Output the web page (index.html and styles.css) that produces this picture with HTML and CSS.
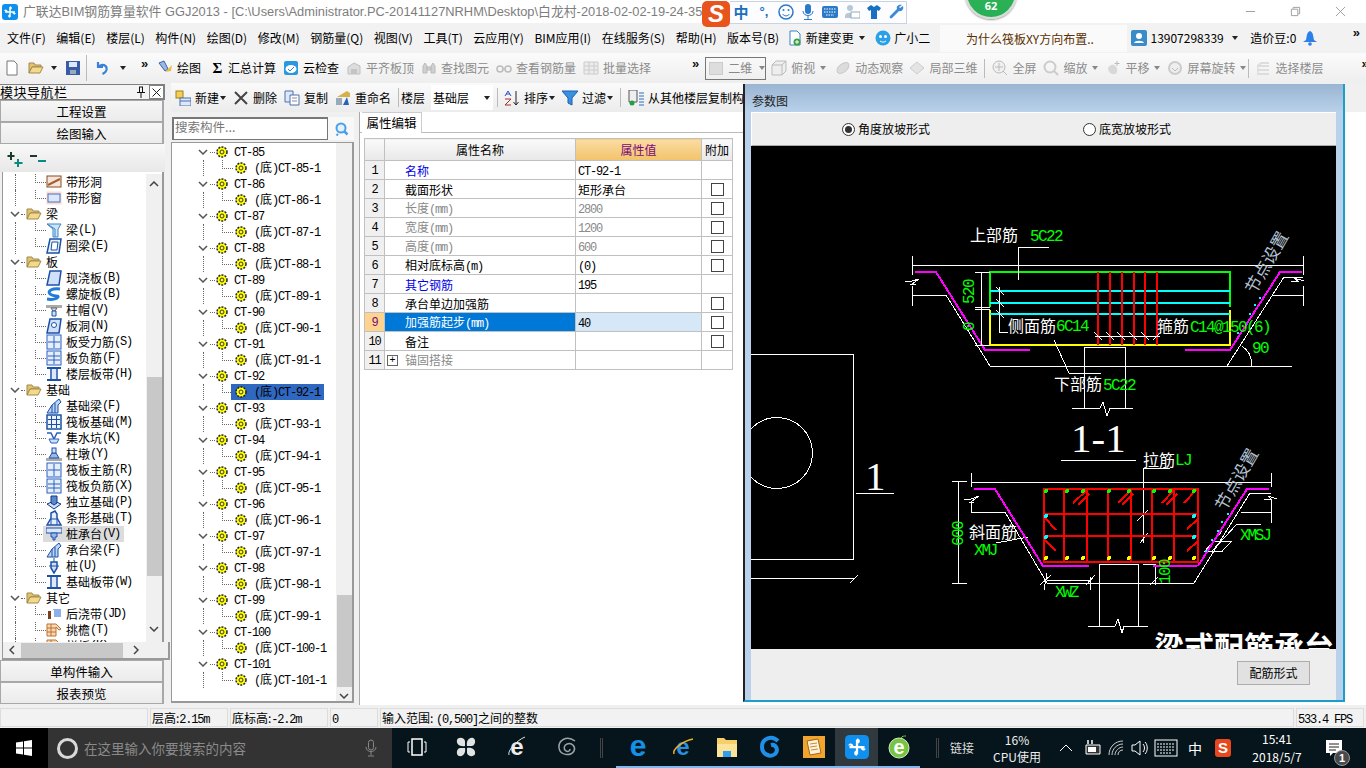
FILE: index.html
```html
<!DOCTYPE html>
<html lang="zh-CN">
<head>
<meta charset="utf-8">
<title>广联达BIM钢筋算量软件 GGJ2013</title>
<link rel="stylesheet" href="styles.css">
</head>
<body>
<svg class="defs">
<symbol id="gl" viewBox="0 0 16 16"><rect x="0" y="0" width="16" height="16" rx="3" fill="#0f8fee"/><path d="M8 3v10M3 8h10M8 3c1.500 0 1.500 2 0 2M3 7c0-1 2-1 2 1M13 9c0 1-2 1-2-1M8 13c-1.500 0-1.500-2 0-2" stroke="#fff" stroke-width="1.500" fill="none"/></symbol>
<symbol id="folder" viewBox="0 0 16 16"><path d="M1 3h5l1 2h6v2H4l-3 6z" fill="#e4c26c" stroke="#a08a50"/><path d="M4 7h11l-3 6H1z" fill="#f4d98a" stroke="#a08a50"/></symbol>
<symbol id="gear" viewBox="0 0 12 12"><circle cx="6" cy="6" r="5" fill="#ff0" stroke="#222" stroke-width="1.500" stroke-dasharray="2 1.200"/><circle cx="6" cy="6" r="2" fill="#ff0" stroke="#333"/></symbol>
<symbol id="chev" viewBox="0 0 10 6"><path d="M1 1l4 4 4-4" stroke="#555" stroke-width="1.500" fill="none"/></symbol>
<symbol id="hole" viewBox="0 0 16 16"><rect x="1" y="2" width="14" height="11" fill="#f7e4d8" stroke="#8a4a20"/><path d="M2 11l12-6" stroke="#a06030" stroke-width="2"/></symbol>
<symbol id="win" viewBox="0 0 16 16"><rect x="0.500" y="1.500" width="15" height="13" fill="#fbdcd0"/><rect x="2" y="4" width="12" height="8" fill="#dbe8fb" stroke="#4a70c8"/></symbol>
<symbol id="beam" viewBox="0 0 16 16"><path d="M1 2h14l-3 5v8H7V7z" fill="#cfe4f8" stroke="#3a88c8"/><path d="M9 7v8M1 2l8 5" stroke="#3a88c8"/></symbol>
<symbol id="ring" viewBox="0 0 16 16"><path d="M4 1h11l-2 14H1z" fill="#eaf2fc" stroke="#1c50a8" stroke-width="1.500"/><path d="M6 4h6l-1 8H5z" fill="#fff" stroke="#1c50a8"/></symbol>
<symbol id="slab" viewBox="0 0 16 16"><path d="M4 1h11l-2 14H1z" fill="#cfe0f8" stroke="#1c50a8" stroke-width="1.500"/></symbol>
<symbol id="spiral" viewBox="0 0 16 16"><path d="M14 3C6 2 1 5 4 8s9 1 8 3-6 3-11 2" stroke="#1f7ad8" stroke-width="3" fill="none"/></symbol>
<symbol id="cap" viewBox="0 0 16 16"><path d="M0 3h16v3H0z" fill="#aaa"/><path d="M5 6h6l-2 3H7z" fill="#ddd" stroke="#666"/><path d="M6 9h4v5H6z" fill="#cfe0f8" stroke="#1c50a8"/></symbol>
<symbol id="shole" viewBox="0 0 16 16"><path d="M4 1h11l-2 14H1z" fill="#cfe0f8" stroke="#1c50a8" stroke-width="1.500"/><circle cx="8" cy="7" r="2.500" fill="#fff" stroke="#1c50a8"/></symbol>
<symbol id="grid1" viewBox="0 0 16 16"><rect x="1" y="1" width="14" height="14" fill="#e4eefc" stroke="#2a60c0"/><path d="M8 2v12M2 8h12" stroke="#2a60c0"/></symbol>
<symbol id="grid2" viewBox="0 0 16 16"><rect x="1" y="1" width="14" height="14" fill="#e4eefc" stroke="#2a60c0"/><path d="M8 2v12M2 6h12M2 10h12" stroke="#2a60c0"/></symbol>
<symbol id="band" viewBox="0 0 16 16"><path d="M1 2h14M1 14h14" stroke="#1c50a8" stroke-width="2"/><path d="M5 3v10M11 3v10" stroke="#1c50a8" stroke-width="1.500"/><path d="M6 3h4v10H6z" fill="#dce8fa"/></symbol>
<symbol id="fbeam" viewBox="0 0 16 16"><path d="M1 15l5-8 7-6 2 3-3 3v8z" fill="#bcd4f4" stroke="#1c50a8"/><path d="M6 7v8M9 5v10" stroke="#1c50a8"/></symbol>
<symbol id="raft" viewBox="0 0 16 16"><rect x="1" y="1" width="14" height="14" fill="#eef4fc" stroke="#1c50a8" stroke-width="1.500"/><path d="M5.500 2v12M10.500 2v12M2 5.500h12M2 10.500h12" stroke="#1c50a8"/></symbol>
<symbol id="pit" viewBox="0 0 16 16"><path d="M1 3h4l3 6 3-6h4" fill="none" stroke="#2a60c0" stroke-width="1.500"/><path d="M3 9h10l-2 4H5z" fill="#cfe0f8" stroke="#2a60c0"/></symbol>
<symbol id="pier" viewBox="0 0 16 16"><path d="M0 12h16v3H0z" fill="#aaa"/><path d="M3 12l3-5h4l3 5z" fill="#9ab8e8" stroke="#1c50a8"/><rect x="6" y="2" width="4" height="5" fill="#cfe0f8" stroke="#1c50a8"/></symbol>
<symbol id="iso" viewBox="0 0 16 16"><path d="M1 10l7-3 7 3-7 5z" fill="#cfe0f8" stroke="#123a80"/><path d="M5 2h6v7l-3 2-3-2z" fill="#5a88d0" stroke="#123a80"/></symbol>
<symbol id="strip" viewBox="0 0 16 16"><path d="M1 15l4-7V3l4-2 2 3v4l4 7z" fill="#e4eefc" stroke="#1c50a8" stroke-width="1.500"/><path d="M5 15V9h6v6" fill="none" stroke="#1c50a8"/></symbol>
<symbol id="pcap" viewBox="0 0 16 16"><rect x="0" y="2" width="16" height="5" fill="#dce8fa" stroke="#1c50a8"/><path d="M5 7h6v4H9v3H7v-3H5z" fill="#9ab8e8" stroke="#1c50a8"/></symbol>
<symbol id="pile" viewBox="0 0 16 16"><path d="M5 4h6v6l-3 5-3-5z" fill="#cfe0f8" stroke="#1c50a8" stroke-width="1.500"/><path d="M8 0v4M3 8h10" stroke="#1c50a8"/></symbol>
<symbol id="post" viewBox="0 0 16 16"><rect x="2" y="5" width="5" height="8" fill="#7a4020"/><rect x="7" y="3" width="8" height="8" fill="#8eb0e8"/><rect x="5" y="4" width="3" height="10" fill="#fff"/></symbol>
<symbol id="eave" viewBox="0 0 16 16"><path d="M1 2h9l5 5-2 1-3-3v9H1z" fill="#f8d8b0" stroke="#c07030"/><path d="M1 6h9M1 10h9M5 2v12" stroke="#c07030"/></symbol>
<symbol id="gray" viewBox="0 0 16 16"><path d="M2 14V7l6-4 6 3v8z" fill="#dcdcdc" stroke="#c0c0c0"/><path d="M5 9h6v5H5z" fill="#c4c4c4"/></symbol>
</svg>

<div class="app">
<header class="titlebar">
  <svg class="appicon"><use href="#gl"/></svg>
  <span class="apptitle">广联达BIM钢筋算量软件 GGJ2013 - [C:\Users\Administrator.PC-20141127NRHM\Desktop\白龙村-2018-02-02-19-24-35</span>
  <div class="winctl">
    <svg class="wc" viewBox="0 0 12 12"><path d="M1 6h10" stroke="#999"/></svg>
    <svg class="wc" viewBox="0 0 12 12"><path d="M1.500 3.500h7v7h-7zM3.500 3V1.500h7v7H9" stroke="#999" fill="none"/></svg>
    <svg class="wc" viewBox="0 0 12 12"><path d="M1 1l10 10M11 1L1 11" stroke="#999"/></svg>
  </div>
</header>

<nav class="menubar">
  <span>文件(F)</span><span>编辑(E)</span><span>楼层(L)</span><span>构件(N)</span><span>绘图(D)</span><span>修改(M)</span><span>钢筋量(Q)</span><span>视图(V)</span><span>工具(T)</span><span>云应用(Y)</span><span>BIM应用(I)</span><span>在线服务(S)</span><span>帮助(H)</span><span>版本号(B)</span>
  <span class="mi change"><svg class="ic"><path d="M3 1h7l3 3v11H3z" fill="#fff" stroke="#3a80d0"/><circle cx="10" cy="12" r="3.500" fill="#3aa040"/><path d="M8 12h4M10 10v4" stroke="#fff"/></svg>新建变更<i class="caret"></i></span>
  <span class="mi"><svg class="ic"><circle cx="8" cy="8" r="7.500" fill="#2aa0e8"/><circle cx="5.500" cy="6.500" r="1.500" fill="#fff"/><circle cx="10.500" cy="6.500" r="1.500" fill="#fff"/><path d="M5 11c2 1.500 4 1.500 6 0" stroke="#fff" fill="none"/></svg>广小二</span>
  <span class="newstab">为什么筏板XY方向布置..</span>
  <span class="mi user"><svg class="ic usericon"><rect width="16" height="16" rx="2" fill="#3a8cc8"/><circle cx="8" cy="6" r="3" fill="#fff"/><path d="M3 13c1-3 9-3 10 0z" fill="#fff"/></svg>13907298339<i class="caret"></i></span>
  <span class="bean">造价豆:0</span>
  <svg class="ic bell"><path d="M8 1c-3 1-3 4-4 9l-3 2h14l-3-2c-1-5-1-8-4-9z" fill="#2a80e8"/><circle cx="8" cy="14" r="1.800" fill="#2a80e8"/></svg>
  <span class="more">»</span>
</nav>

<div class="toolbar">
  <div class="tseg">
    <svg class="ic"><path d="M3 1h7l3 3v11H3z" fill="#fff" stroke="#777"/></svg>
    <svg class="ic open"><use href="#folder"/></svg><i class="caret c-open"></i>
    <svg class="ic save"><rect x="1" y="1" width="14" height="14" fill="#3a5ca8"/><rect x="4" y="2" width="8" height="5" fill="#dfe8f8"/><rect x="5" y="10" width="6" height="4" fill="#9ab"/></svg>
    <i class="sep tall"></i>
    <svg class="ic"><path d="M4 2v5h5M4.500 7c3-4 9-2 8 3-.5 2-2 3-4 4" stroke="#3a80d8" stroke-width="2.200" fill="none"/></svg><i class="caret c-undo"></i>
    <span class="more seg1more">»</span>
  </div>
  <div class="tgroup g1">
    <span class="ti"><svg class="ic"><path d="M2 3l5-2 4 8-3 2z" fill="#9ab8e8" stroke="#3a60a8"/><path d="M8 12l7-7-1 6z" fill="#e8c040"/></svg>绘图</span>
    <span class="ti"><span class="ic sigma">Σ</span>汇总计算</span>
    <span class="ti"><svg class="ic"><rect x="1" y="1" width="14" height="14" rx="2" fill="#2a98e0"/><ellipse cx="8" cy="9" rx="5.500" ry="4" fill="#fff"/><path d="M5 9l2 2 4-4" stroke="#2a80d0" fill="none"/></svg>云检查</span>
    <span class="ti dis"><svg class="ic"><use href="#gray"/></svg>平齐板顶</span>
    <span class="ti dis"><svg class="ic"><path d="M2 13V6l2-3 2 3v7zM10 13V6l2-3 2 3v7zM6 7h4v3H6z" fill="#d0d0d0" stroke="#bbb"/></svg>查找图元</span>
    <span class="ti dis"><svg class="ic"><circle cx="4" cy="9" r="3" fill="none" stroke="#bbb" stroke-width="1.500"/><circle cx="12" cy="9" r="3" fill="none" stroke="#bbb" stroke-width="1.500"/><path d="M7 9h2" stroke="#bbb"/></svg>查看钢筋量</span>
    <span class="ti dis"><svg class="ic"><path d="M1 2h14v12H1z" fill="#ececec" stroke="#ccc"/><path d="M1 6h14M1 10h14M6 2v12M11 2v12" stroke="#ccc"/></svg>批量选择</span>
    <span class="more m694">»</span>
  </div>
  <div class="tgroup g2">
    <span class="combo2d"><i class="swatch"></i>二维<i class="caret lite"></i></span>
    <span class="ti dis"><svg class="ic"><path d="M1 5l4-4h10v10l-4 4H1zM1 5h10v10M11 5l4-4" fill="#eee" stroke="#bbb"/></svg>俯视<i class="caret lite"></i></span>
    <span class="ti dis t-orbit"><svg class="ic"><ellipse cx="8" cy="8" rx="7" ry="4" transform="rotate(-40 8 8)" fill="#dcdcdc" stroke="#c8c8c8"/></svg>动态观察</span>
    <span class="ti dis t-local"><svg class="ic"><path d="M1 8l7-6 7 6-7 6z" fill="#e4e4e4" stroke="#ccc"/></svg>局部三维</span>
    <i class="sep"></i>
    <span class="ti dis"><svg class="ic"><circle cx="7" cy="7" r="6" fill="#f0f0f0" stroke="#bbb"/><path d="M7 3v8M3 7h8M11 11l4 4" stroke="#bbb"/></svg>全屏</span>
    <span class="ti dis"><svg class="ic"><circle cx="7" cy="7" r="5.500" fill="none" stroke="#ccc" stroke-width="2"/><path d="M11 11l4 4" stroke="#ccc" stroke-width="2"/></svg>缩放<i class="caret lite"></i></span>
    <span class="ti dis"><svg class="ic"><path d="M3 9c0-3 4-5 6-4s4 4 3 7-7 4-9-3z" fill="#d8d8d8"/><path d="M12 1v5M9.500 3.500h5" stroke="#bbb"/></svg>平移<i class="caret lite"></i></span>
    <span class="ti dis"><svg class="ic"><circle cx="8" cy="8" r="6" fill="#eee" stroke="#ccc" stroke-width="2"/><path d="M5 8l3 3 3-3" stroke="#bbb" fill="none"/></svg>屏幕旋转<i class="caret lite"></i></span>
    <i class="sep s-last"></i>
    <span class="ti dis last-t"><svg class="ic"><path d="M2 5l4-3h8v2H7L5 5h9v2H5l-3 1 3 1h9v2H5l-3 1 3 1h9v2H2z" fill="#ddd"/></svg>选择楼层</span>
    <span class="more m1355">»</span>
  </div>
</div>

<main class="main">
  <aside class="nav">
    <div class="navtitle"><span>模块导航栏</span><svg class="pin" viewBox="0 0 10 12"><path d="M3 1h4M3.500 1v5M6.500 1v5M1 6.500h8M5 7v5" stroke="#111" fill="none"/></svg><span class="navx"><svg viewBox="0 0 9 9" class="navxi"><path d="M0.500 0.500l8 8M8.500 0.500l-8 8" stroke="#222" fill="none"/></svg></span></div>
    <div class="navbtn">工程设置</div>
    <div class="navbtn">绘图输入</div>
    <div class="navhead">
      <svg class="pm" viewBox="0 0 16 16"><path d="M4 1v8M0.500 5h7" stroke="#1a3a2a" stroke-width="2"/><path d="M11 8v8M7.500 12h8" stroke="#0a8a80" stroke-width="2"/></svg>
      <svg class="pm" viewBox="0 0 16 16"><path d="M0 5h7" stroke="#1a3a2a" stroke-width="2"/><path d="M8 10h8" stroke="#0a8a80" stroke-width="2"/></svg>
    </div>
    <div class="navtree">
      <div class="tree-wrap">
        <div class="n2"><i class="v"></i><i class="el"></i><svg class="ic"><use href="#hole"/></svg>带形洞</div>
        <div class="n2"><i class="v"></i><i class="el"></i><svg class="ic"><use href="#win"/></svg>带形窗</div>
        <div class="n1"><svg class="chev"><use href="#chev"/></svg><i class="d"></i><svg class="ic"><use href="#folder"/></svg>梁</div>
        <div class="n2"><i class="v"></i><i class="el"></i><svg class="ic"><use href="#beam"/></svg>梁<span class="m">(L)</span></div>
        <div class="n2"><i class="v"></i><i class="el"></i><svg class="ic"><use href="#ring"/></svg>圈梁<span class="m">(E)</span></div>
        <div class="n1"><svg class="chev"><use href="#chev"/></svg><i class="d"></i><svg class="ic"><use href="#folder"/></svg>板</div>
        <div class="n2"><i class="v"></i><i class="el"></i><svg class="ic"><use href="#slab"/></svg>现浇板<span class="m">(B)</span></div>
        <div class="n2"><i class="v"></i><i class="el"></i><svg class="ic"><use href="#spiral"/></svg>螺旋板<span class="m">(B)</span></div>
        <div class="n2"><i class="v"></i><i class="el"></i><svg class="ic"><use href="#cap"/></svg>柱帽<span class="m">(V)</span></div>
        <div class="n2"><i class="v"></i><i class="el"></i><svg class="ic"><use href="#shole"/></svg>板洞<span class="m">(N)</span></div>
        <div class="n2"><i class="v"></i><i class="el"></i><svg class="ic"><use href="#grid1"/></svg>板受力筋<span class="m">(S)</span></div>
        <div class="n2"><i class="v"></i><i class="el"></i><svg class="ic"><use href="#grid2"/></svg>板负筋<span class="m">(F)</span></div>
        <div class="n2"><i class="v"></i><i class="el"></i><svg class="ic"><use href="#band"/></svg>楼层板带<span class="m">(H)</span></div>
        <div class="n1"><svg class="chev"><use href="#chev"/></svg><i class="d"></i><svg class="ic"><use href="#folder"/></svg>基础</div>
        <div class="n2"><i class="v"></i><i class="el"></i><svg class="ic"><use href="#fbeam"/></svg>基础梁<span class="m">(F)</span></div>
        <div class="n2"><i class="v"></i><i class="el"></i><svg class="ic"><use href="#raft"/></svg>筏板基础<span class="m">(M)</span></div>
        <div class="n2"><i class="v"></i><i class="el"></i><svg class="ic"><use href="#pit"/></svg>集水坑<span class="m">(K)</span></div>
        <div class="n2"><i class="v"></i><i class="el"></i><svg class="ic"><use href="#pier"/></svg>柱墩<span class="m">(Y)</span></div>
        <div class="n2"><i class="v"></i><i class="el"></i><svg class="ic"><use href="#grid1"/></svg>筏板主筋<span class="m">(R)</span></div>
        <div class="n2"><i class="v"></i><i class="el"></i><svg class="ic"><use href="#grid2"/></svg>筏板负筋<span class="m">(X)</span></div>
        <div class="n2"><i class="v"></i><i class="el"></i><svg class="ic"><use href="#iso"/></svg>独立基础<span class="m">(P)</span></div>
        <div class="n2"><i class="v"></i><i class="el"></i><svg class="ic"><use href="#strip"/></svg>条形基础<span class="m">(T)</span></div>
        <div class="n2"><i class="v"></i><i class="el"></i><span class="hl"><svg class="ic"><use href="#pcap"/></svg>桩承台<span class="m">(V)</span></span></div>
        <div class="n2"><i class="v"></i><i class="el"></i><svg class="ic"><use href="#fbeam"/></svg>承台梁<span class="m">(F)</span></div>
        <div class="n2"><i class="v"></i><i class="el"></i><svg class="ic"><use href="#pile"/></svg>桩<span class="m">(U)</span></div>
        <div class="n2"><i class="v"></i><i class="el"></i><svg class="ic"><use href="#band"/></svg>基础板带<span class="m">(W)</span></div>
        <div class="n1"><svg class="chev"><use href="#chev"/></svg><i class="d"></i><svg class="ic"><use href="#folder"/></svg>其它</div>
        <div class="n2"><i class="v"></i><i class="el"></i><svg class="ic"><use href="#post"/></svg>后浇带<span class="m">(JD)</span></div>
        <div class="n2"><i class="v"></i><i class="el"></i><svg class="ic"><use href="#eave"/></svg>挑檐<span class="m">(T)</span></div>
        <div class="n2"><i class="v"></i><i class="el"></i><svg class="ic"><use href="#eave"/></svg>栏板<span class="m">(K)</span></div>
      </div>
      <div class="vscroll">
        <svg class="arrow" viewBox="0 0 10 6"><path d="M1 5l4-4 4 4" stroke="#444" stroke-width="1.500" fill="none"/></svg>
        <i class="thumb th1"></i>
        <svg class="arrow" viewBox="0 0 10 6"><path d="M1 1l4 4 4-4" stroke="#444" stroke-width="1.500" fill="none"/></svg>
      </div>
    </div>
    <div class="hscroll">
      <svg class="arrow-h" viewBox="0 0 6 10"><path d="M5 1L1 5l4 4" stroke="#444" stroke-width="1.500" fill="none"/></svg>
      <i class="hthumb"></i>
      <svg class="arrow-h" viewBox="0 0 6 10"><path d="M1 1l4 4-4 4" stroke="#444" stroke-width="1.500" fill="none"/></svg>
    </div>
    <div class="navbtn">单构件输入</div>
    <div class="navbtn">报表预览</div>
  </aside>

  <section class="work">
    <div class="toolbar2">
      <span class="ti"><svg class="ic"><rect x="1" y="1" width="7" height="7" fill="#f4d050" stroke="#a08020"/><rect x="5" y="8" width="11" height="8" fill="#dfe8f8" stroke="#4a70b0"/><path d="M5 11h11" stroke="#4a70b0"/></svg>新建<i class="caret"></i></span>
      <span class="ti t-del"><svg class="ic"><path d="M2 2l12 12M14 2L2 14" stroke="#444" stroke-width="2"/></svg>删除</span>
      <span class="ti"><svg class="ic"><path d="M1 1h8v11H1z" fill="#dfe8f8" stroke="#4a70b0"/><path d="M6 5h9v10H6z" fill="#fff" stroke="#4a70b0"/><path d="M8 8h5M8 11h5" stroke="#88a"/></svg>复制</span>
      <span class="ti"><svg class="ic"><path d="M2 7l10-6 3 2v4z" fill="#d8b048"/><rect x="1" y="8" width="6" height="7" fill="#9ab"/><path d="M8 15l4-8 2 8z" fill="#2a60c0"/></svg>重命名</span>
      <i class="sep"></i>
      <span class="floorlabel">楼层</span>
      <span class="combofloor">基础层<i class="caret"></i></span>
      <i class="sep s-a"></i>
      <span class="ti"><svg class="ic"><path d="M1 6l3-5 3 5M2 4h4" stroke="#2a50c0" fill="none"/><path d="M1 9h6l-6 6h6" stroke="#a03030" fill="none"/><path d="M12 1v14M9.500 12l2.500 3 2.500-3" stroke="#222" fill="none"/></svg>排序<i class="caret"></i></span>
      <span class="ti"><svg class="ic"><path d="M0 1h16l-6 7v7l-4-2V8z" fill="#3a90e0" stroke="#1a60b0"/></svg>过滤<i class="caret"></i></span>
      <i class="sep"></i>
      <span class="ti t-c"><svg class="ic"><path d="M1 0h8v12H1z" fill="#eee" stroke="#555"/><circle cx="4" cy="13" r="2.500" fill="#20a040"/><path d="M11 3h5M11 6h5M11 9h5M11 12h5M11 15h5" stroke="#2a70c0"/></svg>从其他楼层复制构</span>
    </div>
    <div class="split">
      <div class="cpanel">
        <div class="searchrow">
          <div class="searchbox">搜索构件...</div>
          <div class="searchbtn"><svg class="ic"><circle cx="7" cy="7" r="4.500" fill="#e4f0fc" stroke="#4aa0e8" stroke-width="2"/><path d="M4 13l-1.500 1.500" stroke="#4aa0e8" stroke-width="2"/><path d="M10.500 10.500l3 3" stroke="#4aa0e8" stroke-width="2.500"/></svg></div>
        </div>
        <div class="ctree">
          <div class="ctree-body">
            <div class="c1"><svg class="chev"><use href="#chev"/></svg><i class="d"></i><svg class="gi"><use href="#gear"/></svg><span class="m">CT-85</span></div>
            <div class="c2"><i class="v"></i><i class="el"></i><svg class="gi"><use href="#gear"/></svg><span class="lab"><span class="m">(</span>底<span class="m">)CT-85-1</span></span></div>
            <div class="c1"><svg class="chev"><use href="#chev"/></svg><i class="d"></i><svg class="gi"><use href="#gear"/></svg><span class="m">CT-86</span></div>
            <div class="c2"><i class="v"></i><i class="el"></i><svg class="gi"><use href="#gear"/></svg><span class="lab"><span class="m">(</span>底<span class="m">)CT-86-1</span></span></div>
            <div class="c1"><svg class="chev"><use href="#chev"/></svg><i class="d"></i><svg class="gi"><use href="#gear"/></svg><span class="m">CT-87</span></div>
            <div class="c2"><i class="v"></i><i class="el"></i><svg class="gi"><use href="#gear"/></svg><span class="lab"><span class="m">(</span>底<span class="m">)CT-87-1</span></span></div>
            <div class="c1"><svg class="chev"><use href="#chev"/></svg><i class="d"></i><svg class="gi"><use href="#gear"/></svg><span class="m">CT-88</span></div>
            <div class="c2"><i class="v"></i><i class="el"></i><svg class="gi"><use href="#gear"/></svg><span class="lab"><span class="m">(</span>底<span class="m">)CT-88-1</span></span></div>
            <div class="c1"><svg class="chev"><use href="#chev"/></svg><i class="d"></i><svg class="gi"><use href="#gear"/></svg><span class="m">CT-89</span></div>
            <div class="c2"><i class="v"></i><i class="el"></i><svg class="gi"><use href="#gear"/></svg><span class="lab"><span class="m">(</span>底<span class="m">)CT-89-1</span></span></div>
            <div class="c1"><svg class="chev"><use href="#chev"/></svg><i class="d"></i><svg class="gi"><use href="#gear"/></svg><span class="m">CT-90</span></div>
            <div class="c2"><i class="v"></i><i class="el"></i><svg class="gi"><use href="#gear"/></svg><span class="lab"><span class="m">(</span>底<span class="m">)CT-90-1</span></span></div>
            <div class="c1"><svg class="chev"><use href="#chev"/></svg><i class="d"></i><svg class="gi"><use href="#gear"/></svg><span class="m">CT-91</span></div>
            <div class="c2"><i class="v"></i><i class="el"></i><svg class="gi"><use href="#gear"/></svg><span class="lab"><span class="m">(</span>底<span class="m">)CT-91-1</span></span></div>
            <div class="c1"><svg class="chev"><use href="#chev"/></svg><i class="d"></i><svg class="gi"><use href="#gear"/></svg><span class="m">CT-92</span></div>
            <div class="c2"><i class="v"></i><i class="el"></i><span class="selbar"><svg class="gi"><use href="#gear"/></svg><span class="lab"><span class="m">(</span>底<span class="m">)CT-92-1</span></span></span></div>
            <div class="c1"><svg class="chev"><use href="#chev"/></svg><i class="d"></i><svg class="gi"><use href="#gear"/></svg><span class="m">CT-93</span></div>
            <div class="c2"><i class="v"></i><i class="el"></i><svg class="gi"><use href="#gear"/></svg><span class="lab"><span class="m">(</span>底<span class="m">)CT-93-1</span></span></div>
            <div class="c1"><svg class="chev"><use href="#chev"/></svg><i class="d"></i><svg class="gi"><use href="#gear"/></svg><span class="m">CT-94</span></div>
            <div class="c2"><i class="v"></i><i class="el"></i><svg class="gi"><use href="#gear"/></svg><span class="lab"><span class="m">(</span>底<span class="m">)CT-94-1</span></span></div>
            <div class="c1"><svg class="chev"><use href="#chev"/></svg><i class="d"></i><svg class="gi"><use href="#gear"/></svg><span class="m">CT-95</span></div>
            <div class="c2"><i class="v"></i><i class="el"></i><svg class="gi"><use href="#gear"/></svg><span class="lab"><span class="m">(</span>底<span class="m">)CT-95-1</span></span></div>
            <div class="c1"><svg class="chev"><use href="#chev"/></svg><i class="d"></i><svg class="gi"><use href="#gear"/></svg><span class="m">CT-96</span></div>
            <div class="c2"><i class="v"></i><i class="el"></i><svg class="gi"><use href="#gear"/></svg><span class="lab"><span class="m">(</span>底<span class="m">)CT-96-1</span></span></div>
            <div class="c1"><svg class="chev"><use href="#chev"/></svg><i class="d"></i><svg class="gi"><use href="#gear"/></svg><span class="m">CT-97</span></div>
            <div class="c2"><i class="v"></i><i class="el"></i><svg class="gi"><use href="#gear"/></svg><span class="lab"><span class="m">(</span>底<span class="m">)CT-97-1</span></span></div>
            <div class="c1"><svg class="chev"><use href="#chev"/></svg><i class="d"></i><svg class="gi"><use href="#gear"/></svg><span class="m">CT-98</span></div>
            <div class="c2"><i class="v"></i><i class="el"></i><svg class="gi"><use href="#gear"/></svg><span class="lab"><span class="m">(</span>底<span class="m">)CT-98-1</span></span></div>
            <div class="c1"><svg class="chev"><use href="#chev"/></svg><i class="d"></i><svg class="gi"><use href="#gear"/></svg><span class="m">CT-99</span></div>
            <div class="c2"><i class="v"></i><i class="el"></i><svg class="gi"><use href="#gear"/></svg><span class="lab"><span class="m">(</span>底<span class="m">)CT-99-1</span></span></div>
            <div class="c1"><svg class="chev"><use href="#chev"/></svg><i class="d"></i><svg class="gi"><use href="#gear"/></svg><span class="m">CT-100</span></div>
            <div class="c2"><i class="v"></i><i class="el"></i><svg class="gi"><use href="#gear"/></svg><span class="lab"><span class="m">(</span>底<span class="m">)CT-100-1</span></span></div>
            <div class="c1"><svg class="chev"><use href="#chev"/></svg><i class="d"></i><svg class="gi"><use href="#gear"/></svg><span class="m">CT-101</span></div>
            <div class="c2"><i class="v"></i><i class="el"></i><svg class="gi"><use href="#gear"/></svg><span class="lab"><span class="m">(</span>底<span class="m">)CT-101-1</span></span></div>
          </div>
          <div class="vscroll v2">
            <i class="thumb th0"></i>
            <i class="thumb th2"></i>
            <svg class="arrow" viewBox="0 0 10 6"><path d="M1 1l4 4 4-4" stroke="#444" stroke-width="1.500" fill="none"/></svg>
          </div>
        </div>
      </div>
      <div class="props">
        <div class="tabs"><span class="tab">属性编辑</span></div>
        <table class="grid">
          <colgroup><col class="c-i"><col class="c-n"><col class="c-v"><col class="c-a"></colgroup>
          <thead><tr><th></th><th>属性名称</th><th class="hv">属性值</th><th>附加</th></tr></thead>
          <tbody>
            <tr><td class="idx">1</td><td class="nm blue">名称</td><td class="val"><span class="m">CT-92-1</span></td><td></td></tr>
            <tr><td class="idx">2</td><td class="nm">截面形状</td><td class="val">矩形承台</td><td><i class="cb"></i></td></tr>
            <tr class="off"><td class="idx">3</td><td class="nm">长度<span class="m">(mm)</span></td><td class="val"><span class="m">2800</span></td><td><i class="cb"></i></td></tr>
            <tr class="off"><td class="idx">4</td><td class="nm">宽度<span class="m">(mm)</span></td><td class="val"><span class="m">1200</span></td><td><i class="cb"></i></td></tr>
            <tr class="off"><td class="idx">5</td><td class="nm">高度<span class="m">(mm)</span></td><td class="val"><span class="m">600</span></td><td><i class="cb"></i></td></tr>
            <tr><td class="idx">6</td><td class="nm">相对底标高<span class="m">(m)</span></td><td class="val"><span class="m">(0)</span></td><td><i class="cb"></i></td></tr>
            <tr><td class="idx">7</td><td class="nm blue">其它钢筋</td><td class="val"><span class="m">195</span></td><td></td></tr>
            <tr><td class="idx">8</td><td class="nm">承台单边加强筋</td><td class="val"></td><td><i class="cb"></i></td></tr>
            <tr class="cur"><td class="idx">9</td><td class="nm">加强筋起步<span class="m">(mm)</span></td><td class="val"><span class="m">40</span></td><td><i class="cb"></i></td></tr>
            <tr><td class="idx">10</td><td class="nm">备注</td><td class="val"></td><td><i class="cb"></i></td></tr>
            <tr class="off"><td class="idx">11</td><td class="exp"><div class="expin"><i class="plus">+</i>锚固搭接</div></td><td class="val"></td><td></td></tr>
          </tbody>
        </table>
      </div>
    </div>
  </section>
</main>

<div class="status">
  <span class="s0"></span>
  <span class="s1">层高:<span class="m">2.15m</span></span>
  <span class="s2">底标高:<span class="m">-2.2m</span></span>
  <span class="s3"><span class="m">0</span></span>
  <span class="s4">输入范围: <span class="m">(0,500]</span>之间的整数</span>
  <span class="s5"><span class="m">533.4 FPS</span></span>
</div>

<footer class="taskbar">
  <div class="start"><svg class="winlogo" viewBox="0 0 16 16"><path d="M0 2.500l7-1v6H0zM8 1.300l8-1.300v7.500H8zM0 8.500h7v6l-7-1zM8 8.500h8V16l-8-1.200z" fill="#fff"/></svg></div>
  <div class="search"><i class="cortana"></i><span class="stext">在这里输入你要搜索的内容</span><svg class="mic" viewBox="0 0 12 18"><rect x="3.500" y="1" width="5" height="10" rx="2.500" fill="none" stroke="#888"/><path d="M1 8c0 6 10 6 10 0M6 13v3M3 17h6" stroke="#888" fill="none"/></svg></div>
  <div class="task w49"><svg class="tk" viewBox="0 0 20 20"><path d="M5 2h10v16H5z" fill="none" stroke="#fff" stroke-width="1.500"/><path d="M3 5H1v10h2M17 5h2v10h-2" fill="none" stroke="#fff"/></svg></div>
  <div class="task w50"><svg class="tk big" viewBox="0 0 24 24"><g fill="#dfe3e4"><path d="M11 11C6 12 2 9 3 5c1-3 7-3 8 1zM13 11c-1-5 2-9 6-8 3 1 3 7-1 8zM13 13c5-1 9 2 8 6-1 3-7 3-8-1zM11 13c1 5-2 9-6 8-3-1-3-7 1-8z"/></g></svg></div>
  <div class="task w52"><svg class="tk big" viewBox="0 0 24 24"><text x="12" y="20" class="ie-w">e</text><path d="M4 20C2 16 12 5 20 2" stroke="#ddd" fill="none"/></svg></div>
  <div class="task w48"><svg class="tk big" viewBox="0 0 24 24"><path d="M20 6C12 0 3 5 4 13c1 7 11 9 15 3 2-4-2-9-7-7-3 1-4 5-1 7 2 1 4 0 4-2" fill="none" stroke="#9ea3a5" stroke-width="1.500"/></svg></div>
  <i class="tsep m1"></i>
  <div class="task w44"><svg class="tk big" viewBox="0 0 24 24"><text x="12" y="21" class="edge">e</text></svg></div>
  <div class="task w45"><svg class="tk big" viewBox="0 0 24 24"><text x="12" y="20" class="ie-b">e</text><path d="M3 19C1 14 12 6 22 4" stroke="#f0b020" fill="none" stroke-width="1.500"/></svg></div>
  <div class="task w43"><svg class="tk big" viewBox="0 0 24 24"><path d="M2 3h7l2 2h11v17H2z" fill="#f6cf6a"/><path d="M2 9h20v13H2z" fill="#fbe39a"/><path d="M8 22v-6h8v6z" fill="#2f9fe8"/></svg></div>
  <div class="task w44"><svg class="tk big" viewBox="0 0 24 24"><path d="M20 6C14 0 4 3 4 12c0 7 8 11 13 7 4-4 1-10-4-9" fill="none" stroke="#1f8fe8" stroke-width="4"/></svg></div>
  <div class="task w43"><svg class="tk big" viewBox="0 0 24 24"><rect x="1" y="1" width="22" height="22" fill="#f2a52c"/><path d="M5 6l11-2 3 14-11 2z" fill="#fff3d8" stroke="#a8621a"/><path d="M8 9l7-1M8 12l7-1M9 15l7-1" stroke="#c58a3c"/></svg></div>
  <div class="task w43 act"><svg class="tk big" viewBox="0 0 24 24"><use href="#gl"/></svg></div>
  <div class="task w42"><svg class="tk big" viewBox="0 0 24 24"><circle cx="12" cy="13" r="10" fill="#76c442" stroke="#d6e8c6"/><text x="12" y="19" class="ie-g">e</text><path d="M14 3c1-2 3-2 5-2" stroke="#76c442" fill="none"/></svg></div>
  <i class="tsep m2"></i>
  <span class="link">链接</span>
  <div class="cpu"><span>16%</span><span>CPU使用</span></div>
  <div class="tray t18"><svg class="ti14" viewBox="0 0 14 14"><path d="M1 10l6-6 6 6" stroke="#fff" fill="none"/></svg></div>
  <div class="tray t26 t-ml"><svg class="ti18" viewBox="0 0 18 18"><path d="M3 6h14v9H3z" fill="#333" stroke="#fff"/><path d="M5 8h8v5H5z" fill="#fff"/><path d="M5 1v4M9 1v4" stroke="#fff" stroke-width="1.500"/></svg></div>
  <div class="tray t22"><svg class="ti18" viewBox="0 0 18 18"><path d="M2 16C2 8 8 2 16 2M5 16c0-6 5-11 11-11M8 16c0-4 4-8 8-8M11 16c0-3 2-5 5-5" stroke="#ccc" fill="none"/></svg></div>
  <div class="tray t24"><svg class="ti18" viewBox="0 0 18 18"><path d="M2 6h3l5-4v14l-5-4H2z" fill="none" stroke="#fff"/><path d="M13 5c2 2 2 6 0 8M15 3c3 3 3 9 0 12" stroke="#fff" fill="none"/></svg></div>
  <div class="tray t30"><svg class="kbd" viewBox="0 0 24 18"><rect x="1" y="1" width="22" height="16" fill="none" stroke="#fff"/><path d="M3 5h18M3 8h18M3 11h18M6 14h12" stroke="#fff" stroke-dasharray="2 1"/></svg></div>
  <div class="tray t28 zh">中</div>
  <div class="tray t28"><span class="sogou-s">S</span></div>
  <div class="clock"><span>15:41</span><span>2018/5/7</span></div>
  <div class="notif"><svg class="ti18" viewBox="0 0 18 18"><path d="M1 1h16v13H8l-3 3v-3H1z" fill="#fff"/><path d="M4 5h10M4 8h10M4 11h7" stroke="#222"/></svg><span class="nbadge">1</span></div>
</footer>
</div>

<!-- floating window: parameter diagram -->
<div class="dialog">
  <div class="dtitle">参数图</div>
  <div class="dbody">
    <div class="radios">
      <label class="radio rleft"><i class="rb on"></i>角度放坡形式</label>
      <label class="radio rright"><i class="rb"></i>底宽放坡形式</label>
    </div>
    <svg class="cad" viewBox="751 146 585 503">
      <!-- section 1-1 frame -->
      <path class="w" d="M912 256V275M905 281H912L919 279L912 284H916M912 286V306M912 265H1303M912 295H946L990 366H1292M1227 366L1284 277H1303M1303 256V275M1303 286V306M1272 295H1303M1291 281H1298L1294 278L1304 281"/>
      <path class="mg" d="M915 272H936L985 350H1030M1185 350H1230L1280 272H1302"/>
      <path class="gn2" d="M990 307V272H1230V307"/>
      <path class="yl" d="M990 310V345H1230V310"/>
      <path class="cy" d="M990 291H1230M990 303H1230M990 314H1230"/>
      <path class="rd" d="M1098 272V345M1110 272V345M1122 272V345M1134 272V345M1145 272V345M1157 272V345"/>
      <path class="w" d="M975 272H990M975 307H990M975 309H990M975 345H990M981 272V345M1018 280V247H1049M999 287V332H1008M996 287L1004 295M996 299L1004 307M996 310L1004 318M1054 340L1069 373H1101M1095 336H1160M1094 332L1102 340M1106 332L1114 340M1117 332L1125 340M1129 332L1137 340M1141 332L1149 340M1153 340L1161 332M1242 346C1248 350 1252 357 1252 366M1084 408V347H1125V408M1072 408H1100L1103 402L1107 416L1110 408H1133"/>
      <text class="tw" x="970" y="241">上部筋</text><text class="tg" x="1030" y="241">5C22</text>
      <text class="tw" x="1008" y="332">侧面筋</text><text class="tg" x="1056" y="331">6C14</text>
      <text class="tw" x="1157" y="332">箍筋</text><text class="tg" x="1190" y="332">C14@150(6)</text>
      <text class="tg" x="1252" y="353">90</text>
      <text class="tw" x="1054" y="390">下部筋</text><text class="tg" x="1103" y="390">5C22</text>
      <text class="tg" transform="translate(974 304) rotate(-90)">520</text>
      <text class="tg" transform="translate(974 331) rotate(-90)">0</text>
      <text class="tn" transform="translate(1255 295) rotate(-60)">节点设置</text>
      <g class="dc"><circle cx="1260" cy="298" r="1"/><circle cx="1255" cy="305" r="1"/><circle cx="1250" cy="314" r="1"/><circle cx="1238" cy="333" r="1"/></g>

      <!-- plan -->
      <path class="w" d="M751 354H853.500V559H751M751 578H855M850 583L858 575M856 493H894M1061 460H1136M1143 543V468H1170"/>
      <circle class="w" cx="777" cy="453" r="35.500"/>
      <text class="big" x="865" y="490">1</text>
      <text class="big" x="1071" y="452">1-1</text>
      <text class="tw" x="1143" y="466">拉筋</text><text class="tg" x="1175" y="465">LJ</text>

      <!-- section 2-2 -->
      <path class="w" d="M971 473V487M964 499H971L979 496L971 502H974M971 503V512M971 482H1271M971 512H1005L1047 583H1194L1250 493H1271M1271 473V487M1271 500V523M1241 512H1271M1264 499H1271L1268 496L1277 499M958 482V583M952 481H967M952 583H967M1047 573L1044 590M1090 577L1091 590M1040 585L1051 575M1086 585L1095 575M1047 580H1090M1099 626V564H1138V626M1088 626H1115L1118 619L1122 633L1124 626H1148M1143 564H1155V585M1150 585L1158 577M1137 521L1148 510M1140 543L1148 533M996 543L1028 537M1237 524H1261M1237 524L1212 551M1204 551H1223M1212 541H1232M1222 531L1205 551M1232 541L1222 551"/>
      <path class="mg" d="M974 489H995L1043 566H1089M1153 566H1197M1198 566L1247 489H1269"/>
      <path class="rd" d="M1043.500 489H1198V562H1043.500ZM1064 489V562M1087 489V562M1108 489V562M1131 489V562M1152 489V562M1174 489V562M1043.500 514H1198M1043.500 536H1198M1073 503L1087 490M1078 505L1089 494M1118 503L1131 490M1122 505L1133 494M1162 503L1174 490M1166 505L1177 494M1184 503L1196 490M1045 518L1056 530M1045 540L1056 551M1187 529L1197 520M1187 551L1197 542"/>
      <g class="dg"><circle cx="1046" cy="491" r="2"/><circle cx="1067" cy="491" r="2"/><circle cx="1083" cy="491" r="2"/><circle cx="1109" cy="491" r="2"/><circle cx="1129" cy="491" r="2"/><circle cx="1154" cy="491" r="2"/><circle cx="1170" cy="491" r="2"/><circle cx="1194" cy="491" r="2"/></g>
      <g class="dy"><circle cx="1046" cy="558" r="2"/><circle cx="1067" cy="558" r="2"/><circle cx="1083" cy="558" r="2"/><circle cx="1109" cy="558" r="2"/><circle cx="1129" cy="558" r="2"/><circle cx="1154" cy="558" r="2"/><circle cx="1170" cy="558" r="2"/><circle cx="1194" cy="558" r="2"/></g>
      <g class="dc2"><circle cx="1046" cy="516" r="2"/><circle cx="1046" cy="537" r="2"/><circle cx="1194" cy="516" r="2"/><circle cx="1194" cy="537" r="2"/></g>
      <g class="dc"><circle cx="1228" cy="514" r="1"/><circle cx="1222" cy="522" r="1"/><circle cx="1218" cy="531" r="1.500"/><circle cx="1212" cy="540" r="1"/><circle cx="1206" cy="551" r="1"/></g>
      <text class="tw" x="969" y="538">斜面筋</text>
      <text class="tg tall-t" x="974" y="555">XMJ</text>
      <text class="tg tall-t" x="1240" y="540">XMSJ</text>
      <text class="tg tall-t" x="1055" y="597">XWZ</text>
      <text class="tg" transform="translate(963 546) rotate(-90)">600</text>
      <text class="tg" transform="translate(1170 584) rotate(-90)">100</text>
      <text class="tn" transform="translate(1225 512) rotate(-60)">节点设置</text>
      <text class="ttl" x="1154" y="658">梁式配筋承台</text>
    </svg>
    <div class="dfoot"><span class="dbtn">配筋形式</span></div>
  </div>
</div>

<!-- overlays -->
<div class="ball"><span>62</span></div>
<div class="ime">
  <span class="ime-s">S</span>
  <div class="ime-bar">
    <span class="zh-b">中</span>
    <span class="punc">°,</span>
    <svg class="imi" viewBox="0 0 16 16"><circle cx="8" cy="8" r="7" fill="none" stroke="#2a7ac8" stroke-width="1.500"/><circle cx="5.500" cy="6" r="1" fill="#2a7ac8"/><circle cx="10.500" cy="6" r="1" fill="#2a7ac8"/><path d="M4.500 10c2 2.500 5 2.500 7 0" stroke="#2a7ac8" fill="none"/></svg>
    <svg class="imi" viewBox="0 0 16 16"><rect x="5" y="0" width="6" height="10" rx="3" fill="#2a7ac8"/><path d="M3 7c0 6 10 6 10 0M8 12v3M4 15.500h8" stroke="#2a7ac8" fill="none"/></svg>
    <svg class="imi" viewBox="0 0 16 16"><rect x="0" y="2" width="16" height="12" rx="2" fill="#2a7ac8"/><path d="M2 5h12M2 8h12M4 11h8" stroke="#fff" stroke-dasharray="1.500 1"/></svg>
    <svg class="imi" viewBox="0 0 16 16"><circle cx="6" cy="4" r="3" fill="#b8c8d8"/><path d="M1 12c0-4 8-4 9-1v3H1z" fill="#b8c8d8"/><rect x="7" y="8" width="9" height="6" fill="#fff" stroke="#98a8b8"/></svg>
    <svg class="imi" viewBox="0 0 16 16"><path d="M5 1L1 4l2 3 2-1v9h6V6l2 1 2-3-4-3-3 2z" fill="#1a70c0"/></svg>
    <svg class="imi" viewBox="0 0 16 16"><path d="M14 1c-3-1-6 1-5 4L2 12c-1 2 1 3 2 2l7-7c3 1 5-2 4-5l-3 2-1-1z" fill="#3a88d8"/></svg>
  </div>
</div>
</body>
</html>
```
FILE: styles.css
```css
*{box-sizing:border-box}
html,body{margin:0;padding:0;width:1366px;height:768px;overflow:hidden}
body{position:relative;font:12px/16px "Noto Sans CJK SC","Liberation Sans",sans-serif;color:#000;background:#f0f0f0}
.defs{display:none}
.app{display:flex;flex-direction:column;height:768px}
i{display:block;font-style:normal}
.m{font:12px/14px "Liberation Mono",monospace;letter-spacing:-1.2px}
svg{display:block;flex:none}
.ic{width:16px;height:16px;flex:none}

/* title */
.titlebar{height:23px;background:#fff;display:flex;align-items:center;padding-left:2px;flex:none}
.appicon{width:16px;height:16px}
.apptitle{margin-left:5px;font-size:12.850px;color:#7d7d7d;white-space:nowrap;font-family:"Liberation Sans","Noto Sans CJK SC",sans-serif}
.winctl{margin-left:auto;display:flex;gap:34px;padding-right:20px}
.wc{width:11px;height:11px}

/* menu */
.menubar{height:30px;flex:none;display:flex;align-items:center;gap:10.600px;padding-left:7px;background:#f2f2f2;white-space:nowrap}
.mi{display:flex;align-items:center;gap:3px}
.change{margin-left:-3px}
.caret{width:0;height:0;border:3.500px solid transparent;border-top:4px solid #222;border-bottom:0;margin-left:5px;flex:none}
.caret.lite{border-top-color:#888}
.change .caret{margin-left:2px}
.newstab{margin-left:-1px;width:187px;height:27px;line-height:27px;padding-left:26px;background:#fafafa;color:#5a3000;flex:none}
.user{margin-left:-6px}
.usericon{width:16px}
.bean{margin-left:2px}
.bell{margin-left:-5px}
.more{font:bold 13px/13px "Liberation Sans",sans-serif;color:#111}
.menubar .more{margin-left:auto;margin-right:6px;margin-top:-12px}

/* toolbar 1 */
.toolbar{height:30px;flex:none;display:flex;align-items:center;background:linear-gradient(#fbfbfb,#eeeeee);padding-left:4px;white-space:nowrap}
.tseg{display:flex;align-items:center;width:149px;gap:4px;flex:none}
.tseg .caret{margin-left:1px}
.open{margin-left:4px}
.c-open{margin-left:3px !important}
.save{margin-left:4px}
.c-undo{margin-left:6px !important}
.sep{width:1px;height:19px;background:#bbb;flex:none}
.sep.tall{height:26px;margin:0 3px 0 1px}
.seg1more{margin:-10px 0 0 11px}
.tgroup{display:flex;align-items:center;gap:7px;flex:none}
.ti{display:flex;align-items:center;gap:4px;flex:none}
.ti .caret{margin-left:1px}
.dis{color:#8c8c8c}
.sigma{font:bold 15px/16px "Liberation Serif",serif;text-align:center;padding-left:3px}
.g1{margin-left:4px}
.m694{margin:-10px 0 0 34px}
.g2{margin-left:6px}
.combo2d{width:61px;height:23px;border:1px solid #777;display:flex;align-items:center;gap:5px;padding-left:3px;color:#888;margin-right:-2px;flex:none}
.swatch{width:14px;height:13px;background:#ddd;border:1px solid #ccc}
.combo2d .caret{margin-left:2px}
.t-orbit{margin-left:2px}
.t-local{margin-left:-1px}
.s-last{margin-left:-5px}
.last-t{margin-left:-1px}
.m1355{margin:-10px 0 0 31px}

/* main */
.main{height:625px;flex:none;display:flex;background:#f0f0f0}
.nav{width:165px;flex:none;padding-top:1px;display:flex;flex-direction:column}
.navtitle{height:16px;display:flex;align-items:center;font-size:13px;border:1px solid #808080;border-left:0;background:#f4f4f4}
.navtitle span:first-child{flex:1;letter-spacing:.5px}
.pin{width:10px;height:12px;margin-right:3px}
.navx{width:15px;height:14px;background:#fff;border:1px solid #808080;display:flex;align-items:center;justify-content:center}
.navxi{width:9px;height:9px}
.navbtn{height:22px;flex:none;text-align:center;line-height:21px;font-size:12.500px;background:linear-gradient(#f6f6f6,#ebebeb);border:1px solid #a8a8a8;border-right:2px solid #a8a8a8;margin-right:1px}
.navhead{height:28px;flex:none;display:flex;gap:7px;padding:7px 0 0 7px;background:linear-gradient(#f8f8f8,#e8e8e8)}
.pm{width:16px;height:16px}
.navtree{height:470px;flex:none;display:flex;background:#fff;margin:0 1px 0 2px;border-left:1px solid #999;border-right:2px solid #999;overflow:hidden;padding-top:2px}
.tree-wrap{width:143px;flex:none;overflow:hidden;white-space:nowrap}
.n1,.n2,.c1,.c2{height:16px;display:flex;align-items:center;white-space:nowrap;flex:none}
.n1{padding-left:7px}
.chev{width:10px;height:6px}
.n1 .d{width:4px;border-top:1px dotted #666;margin:0 1px}
.n1 .ic{margin-right:4px}
.n2{padding-left:12px}
.v{width:1px;height:16px;border-left:1px dotted #666;flex:none}
.el{width:11px;height:9px;margin:-8px 0 0 19px;border-left:1px dotted #666;border-bottom:1px dotted #666;flex:none}
.n2 .ic{margin-right:4px}
.hl{display:flex;align-items:center;background:#dcdcdc;width:81px;height:16px;margin-left:-3px;padding-left:3px;flex:none}
.vscroll{flex:1;background:#f0f0f0;display:flex;flex-direction:column;align-items:center;padding-top:7px}
.arrow{width:10px;height:6px;flex:none}
.thumb{width:15px;background:#c8c8c8;flex:none}
.th1{height:199px;margin-top:190px;margin-bottom:50px}
.hscroll{height:16px;flex:none;margin:0 1px 0 2px;border:solid #999;border-width:0 2px 2px 1px;background:#f0f0f0;display:flex;align-items:center;padding:0 2px 0 6px;box-sizing:content-box;width:157px}
.arrow-h{width:6px;height:10px}
.hthumb{width:102px;height:15px;background:#c8c8c8;margin:0 10px 0 6px}

/* work */
.work{width:1201px;flex:none;display:flex;flex-direction:column}
.toolbar2{height:29px;flex:none;padding-left:4px;display:flex;align-items:center;gap:7px;white-space:nowrap;background:linear-gradient(#fafafa,#ececec);width:572px;overflow:hidden;margin-left:6px}
.toolbar2 .ti .caret{margin-left:-3px}
.t-del{margin-left:0}
.toolbar2 .sep{margin:0 -1px 0 0}
.toolbar2 .s-a{margin-left:-3px}
.floorlabel{margin-left:-4px;flex:none}
.combofloor{width:62px;height:25px;margin-left:-1px;background:#fff;display:flex;align-items:center;padding-left:2px;justify-content:space-between;padding-right:3px;flex:none}
.t-c{margin-left:1px}
.split{flex:1;display:flex;min-height:0}
.cpanel{width:183px;margin-left:6px;flex:none;display:flex;flex-direction:column}
.searchrow{height:30px;flex:none;display:flex;padding:5px 0 2px 1px;background:#f0f0f0}
.searchbox{width:156px;height:23px;background:#fff;border:1px solid #777;border-width:2px 1px 1px 2px;color:#777;line-height:16px;padding-left:1px;font-size:12.500px}
.searchbtn{flex:1;display:flex;align-items:center;justify-content:center;background:#f8f8f8;padding-left:2px}
.ctree{height:561px;flex:none;display:flex;background:#fff;border:1px solid #999;border-width:1px 2px 2px 1px;overflow:hidden}
.ctree-body{width:164px;flex:none;padding-top:1px}
.c1{padding-left:26px}
.c1 .d{width:5px;border-top:1px dotted #666;margin:0 1px 0 2px}
.gi{width:12px;height:12px;flex:none}
.c1 .m{margin:2px 0 0 6px}
.c2{padding-left:31px}
.c2 .el{margin-left:18px;margin-right:2px}
.lab{margin:-2px 0 0 7px;white-space:nowrap}
.selbar{display:flex;align-items:center;background:#2f68c0;width:93px;height:16px;margin-left:-4px;padding-left:4px;flex:none}
.v2{padding-top:0}
.th0{height:452px;background:#f0f0f0}
.th2{height:92px}
.v2 .arrow{margin-top:6px}

.props{flex:1;margin-left:5px;background:#fff;margin-bottom:3px;border-left:1px solid #aaa;min-width:0}
.tabs{height:21px;border-bottom:1px solid #bbb;width:390px}
.tab{display:block;width:60px;height:21px;background:#fff;border:1px solid #ccc;border-width:1px 1px 0 0;text-align:center;line-height:19px;font-size:12.500px;margin-left:2px}
.grid{border-collapse:collapse;table-layout:fixed;margin:5px 0 0 4px;width:369px}
.c-i{width:20px}.c-n{width:191px}.c-v{width:126px}.c-a{width:31px}
.grid th,.grid td{border:1px solid #c0c0c0;height:19px;padding:0;font-weight:normal;overflow:hidden;white-space:nowrap;line-height:14px}
.grid th{height:22px;background:linear-gradient(#fafafa,#e8e8e8);text-align:center}
.grid th.hv{background:linear-gradient(#fbdca2,#f2c36a);color:#7a0a7a}
.grid .idx{background:#f0f0f0;text-align:center;font:12px/14px "Liberation Mono",monospace;letter-spacing:-1.2px;padding-top:1px}
.grid .nm{padding:2px 0 0 20px}
.grid .val{padding:2px 0 0 2px}
.blue{color:#0000e8}
.off td{color:#8a8a8a}
.off td.idx{color:#000}
.cur .idx{background:#fdd38e;color:#7a0a7a}
.cur .nm{background:#0078d7;color:#fff}
.cur .val{background:#d6e8f7}
.cb{width:13px;height:13px;border:1px solid #444;background:#fff;margin:0 auto}
.expin{display:flex;align-items:center;gap:7px;padding-left:2px;height:16px}
.plus{width:11px;height:11px;border:1px solid #666;font:10px/9px "Liberation Mono",monospace;text-align:center;color:#000;flex:none}

/* status */
.status{height:20px;flex:none;display:flex;gap:2px;background:#f0f0f0;padding:0 0 1px}
.status span{display:block}
.status>span{border:1px solid #dcdcdc;line-height:18px;background:#f2f2f2;white-space:nowrap;padding-left:1px;flex:none}
.status .m{display:inline;line-height:18px}
.s0{width:148px}.s1{width:78px}.s2{width:98px}.s3{width:48px}.s4{width:914px}.s5{width:68px}

/* taskbar */
.taskbar{height:40px;flex:none;display:flex;align-items:center;background:#06151b;color:#fff;white-space:nowrap}
.start{width:48px;height:40px;background:#000;display:flex;align-items:center;justify-content:center}
.winlogo{width:16px;height:16px}
.search{width:344px;height:40px;background:#333;display:flex;align-items:center;padding-left:9px}
.cortana{width:21px;height:21px;border:3px solid #d8d8d8;border-radius:50%;flex:none}
.stext{margin-left:6px;font-size:13.500px;color:#8a8a8a;flex:1}
.mic{width:12px;height:18px;margin-right:15px}
.task{height:40px;display:flex;align-items:center;justify-content:center;flex:none;border-bottom:2px solid #7db8f0}
.w49,.w50,.w52,.w48{border-bottom-color:transparent}
.w49{width:49px}.w50{width:50px}.w52{width:52px}.w48{width:48px}.w44{width:44px}.w45{width:45px}.w43{width:43px}.w42{width:42px}
.act{background:#30393d}
.tk{width:20px;height:20px}
.tk.big{width:24px;height:24px}
.ie-w,.ie-b,.ie-g,.edge{font:bold 24px/24px "Liberation Sans",sans-serif;text-anchor:middle}
.ie-w{fill:#eee}.ie-b{fill:#2a90e0}.ie-g{fill:#fff;font-size:20px}
.edge{fill:#1590e8;font-size:30px}
.tsep{width:3px;height:20px;border:solid #444;border-width:0 1px;flex:none}
.m1{margin:0 13px 0 9px}
.m2{margin:0 11px 0 16px}
.link{width:27px;font-size:12px;color:#ddd;flex:none}
.cpu{width:80px;display:flex;flex-direction:column;align-items:center;line-height:17px;flex:none;color:#eee}
.tray{display:flex;align-items:center;justify-content:center;height:40px;flex:none}
.t18{width:18px}.t26{width:26px}.t22{width:22px}.t24{width:24px}.t30{width:30px}.t28{width:28px}
.t-ml{margin-left:4px}
.ti14{width:14px;height:14px}.ti18{width:18px;height:18px}
.kbd{width:24px;height:18px}
.zh{font-size:14px}
.sogou-s{width:16px;height:18px;background:#e8481c;border-radius:3px;font:bold 15px/18px "Liberation Sans",sans-serif;text-align:center;color:#fff}
.clock{width:80px;display:flex;flex-direction:column;align-items:center;line-height:18px;flex:none}
.notif{width:34px;height:40px;display:flex;align-items:center;justify-content:center;position:relative}
.nbadge{position:absolute;left:17px;top:22px;width:16px;height:16px;border-radius:50%;background:#4a4a4a;border:1px solid #999;font:bold 11px/14px "Liberation Sans",sans-serif;text-align:center;color:#fff}

/* dialog */
.dialog{position:absolute;left:743px;top:84px;width:602px;height:618px;background:linear-gradient(#9ab5d2 0,#b9d1ea 28px);border-left:2px solid #222;border-right:2px solid #1aa0c8;border-bottom:2px solid #1aa0c8;padding-left:6px;padding-right:7px;display:flex;flex-direction:column}
.dtitle{height:28px;flex:none;line-height:34px;padding-left:1px;color:#222}
.dbody{flex:1;display:flex;flex-direction:column;background:#eee;width:585px;min-height:0}
.radios{height:34px;flex:none;display:flex;align-items:center;background:#eee;border-top:1px solid #fff;border-left:1px solid #fff;border-bottom:1px solid #aaa}
.radio{display:flex;align-items:center;gap:3px;white-space:nowrap}
.rleft{margin-left:90px}
.rright{margin-left:153px}
.rb{width:13px;height:13px;border:1px solid #333;border-radius:50%;background:#fff;position:relative;flex:none}
.rb.on::after{content:"";position:absolute;left:2px;top:2px;width:7px;height:7px;border-radius:50%;background:#333}
.cad{width:585px;height:503px;background:#000;flex:none}
.cad path,.cad circle{fill:none;shape-rendering:crispEdges}
.w{stroke:#fff;stroke-width:1}
.mg{stroke:#f0f;stroke-width:2}
.gn2{stroke:#0f0;stroke-width:2}
.yl{stroke:#ff0;stroke-width:2}
.cy{stroke:#0ff;stroke-width:2}
.rd{stroke:#f00;stroke-width:2}
.cad .dg circle{fill:#0f0}
.cad .dy circle{fill:#ff0}
.cad .dc2 circle{fill:#0ff}
.cad .dc circle{fill:#0ff}
.tw{fill:#fff;font:16px "Noto Sans CJK SC",sans-serif}
.tg{fill:#0f0;font:16px "Liberation Mono",monospace;letter-spacing:-1.600px}
.tall-t{letter-spacing:-2.200px}
.tn{fill:#b4c0d2;font:17px "Noto Sans CJK SC",sans-serif}
.big{fill:#fff;font:41px "Liberation Serif",serif}
.ttl{fill:#fff;font:bold 30px "Noto Sans CJK SC",sans-serif}
.dfoot{flex:1;background:#eee;display:flex;justify-content:flex-end;padding:12px 26px 0 0}
.dbtn{width:73px;height:24px;border:1px solid #adadad;background:#e1e1e1;text-align:center;line-height:22px}

/* overlays */
.ball{position:absolute;left:965px;top:-33px;width:52px;height:52px;border-radius:50%;background:linear-gradient(#2fb350,#28b058);border:2px solid #d8dcd8;box-shadow:0 1px 2px #999;display:flex;align-items:flex-end;justify-content:center}
.ball span{color:#fff;font:bold 11px/16px "Open Sans",sans-serif;padding-bottom:3px}
.ime{position:absolute;left:702px;top:0;height:28px;display:flex;align-items:center}
.ime-s{width:28px;height:26px;background:#e8541c;border-radius:5px;color:#fff;font:italic bold 24px/26px "Liberation Sans",sans-serif;text-align:center;flex:none}
.ime-bar{width:177px;height:23px;margin-top:-4px;background:#fdfdff;border:1px solid #c8d4e4;border-left:0;display:flex;align-items:center;gap:6px;padding-left:2px}
.zh-b{font:bold 15px/20px "Noto Sans CJK SC",sans-serif;color:#1a70c0;width:18px;text-align:center}
.punc{font:bold 13px/14px "Liberation Sans",sans-serif;color:#1a70c0;width:16px;text-align:center}
.imi{width:16px;height:16px}
```
